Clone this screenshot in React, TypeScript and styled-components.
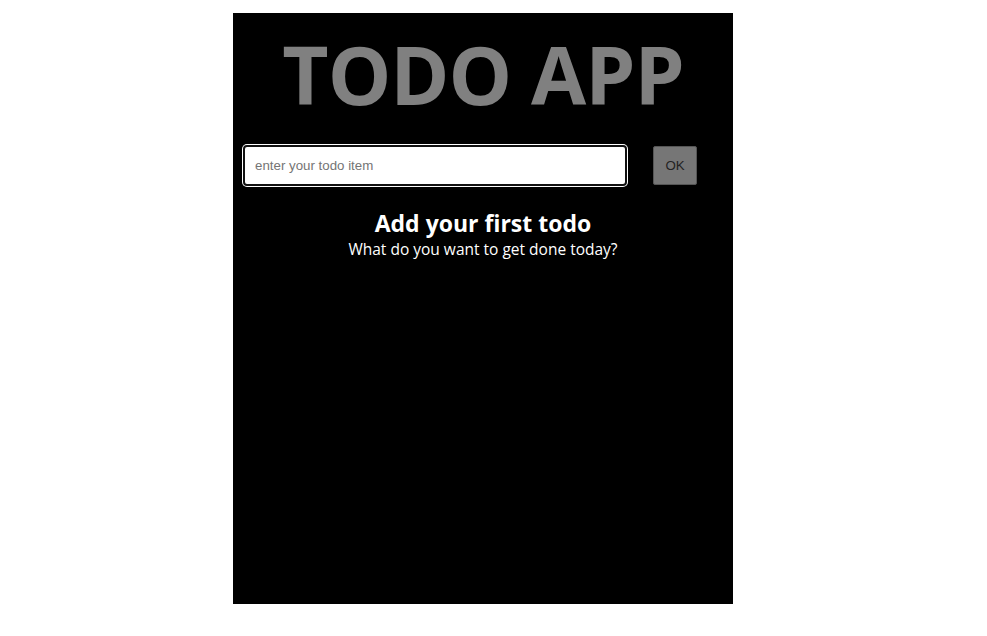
import { useState } from "react";
import styled, { createGlobalStyle } from "styled-components";

const GlobalStyle = createGlobalStyle`
  body {
    margin: 0;
    background: #fff;
    font-family: "Open Sans", "Noto Sans", sans-serif;
  }
`;

const Panel = styled.div`
  width: 500px;
  height: 591px;
  margin: 13px 0 0 233px;
  background: #000;
  display: flex;
  flex-direction: column;
  align-items: center;
  box-sizing: border-box;
`;

const Title = styled.h1`
  margin: 11px 0 0;
  font-size: 80px;
  line-height: 100px;
  font-weight: 700;
  color: #808080;
  letter-spacing: -1px;
`;

const Form = styled.form`
  align-self: stretch;
  display: flex;
  align-items: center;
  gap: 26px;
  padding: 0 10px;
  margin-top: 21px;
`;

const TodoInput = styled.input`
  width: 384px;
  height: 41px;
  box-sizing: border-box;
  border: 2px solid #111;
  border-radius: 4px;
  box-shadow: 0 0 0 1px #fff;
  outline: none;
  padding: 0 10px;
  font-family: "Liberation Sans", Arial, sans-serif;
  font-size: 13.3px;
  color: #222;
  background: #fff;
  &::placeholder {
    color: #757575;
  }
`;

const OkButton = styled.button`
  width: 44px;
  height: 39px;
  background: #767676;
  border: 1px solid #555;
  border-radius: 2px;
  color: #222;
  font-family: "Liberation Sans", Arial, sans-serif;
  font-size: 13.3px;
  cursor: pointer;
`;

const Empty = styled.div`
  margin-top: 22px;
  text-align: center;
  color: #fff;
`;

const EmptyTitle = styled.h2`
  margin: 0;
  font-size: 23px;
  line-height: 30px;
  font-weight: 700;
`;

const EmptyText = styled.p`
  margin: 0;
  font-size: 15.5px;
  line-height: 22px;
`;

export default function App() {
  const [value, setValue] = useState("");
  const [todos, setTodos] = useState<string[]>([]);

  const onSubmit = (e: React.FormEvent) => {
    e.preventDefault();
    if (!value.trim()) return;
    setTodos([...todos, value]);
    setValue("");
  };

  return (
    <>
      <GlobalStyle />
      <Panel>
        <Title>TODO APP</Title>
        <Form onSubmit={onSubmit}>
          <TodoInput
            autoFocus
            placeholder="enter your todo item"
            value={value}
            onChange={(e) => setValue(e.target.value)}
          />
          <OkButton type="submit">OK</OkButton>
        </Form>
        {todos.length === 0 && (
          <Empty>
            <EmptyTitle>Add your first todo</EmptyTitle>
            <EmptyText>What do you want to get done today?</EmptyText>
          </Empty>
        )}
      </Panel>
    </>
  );
}
